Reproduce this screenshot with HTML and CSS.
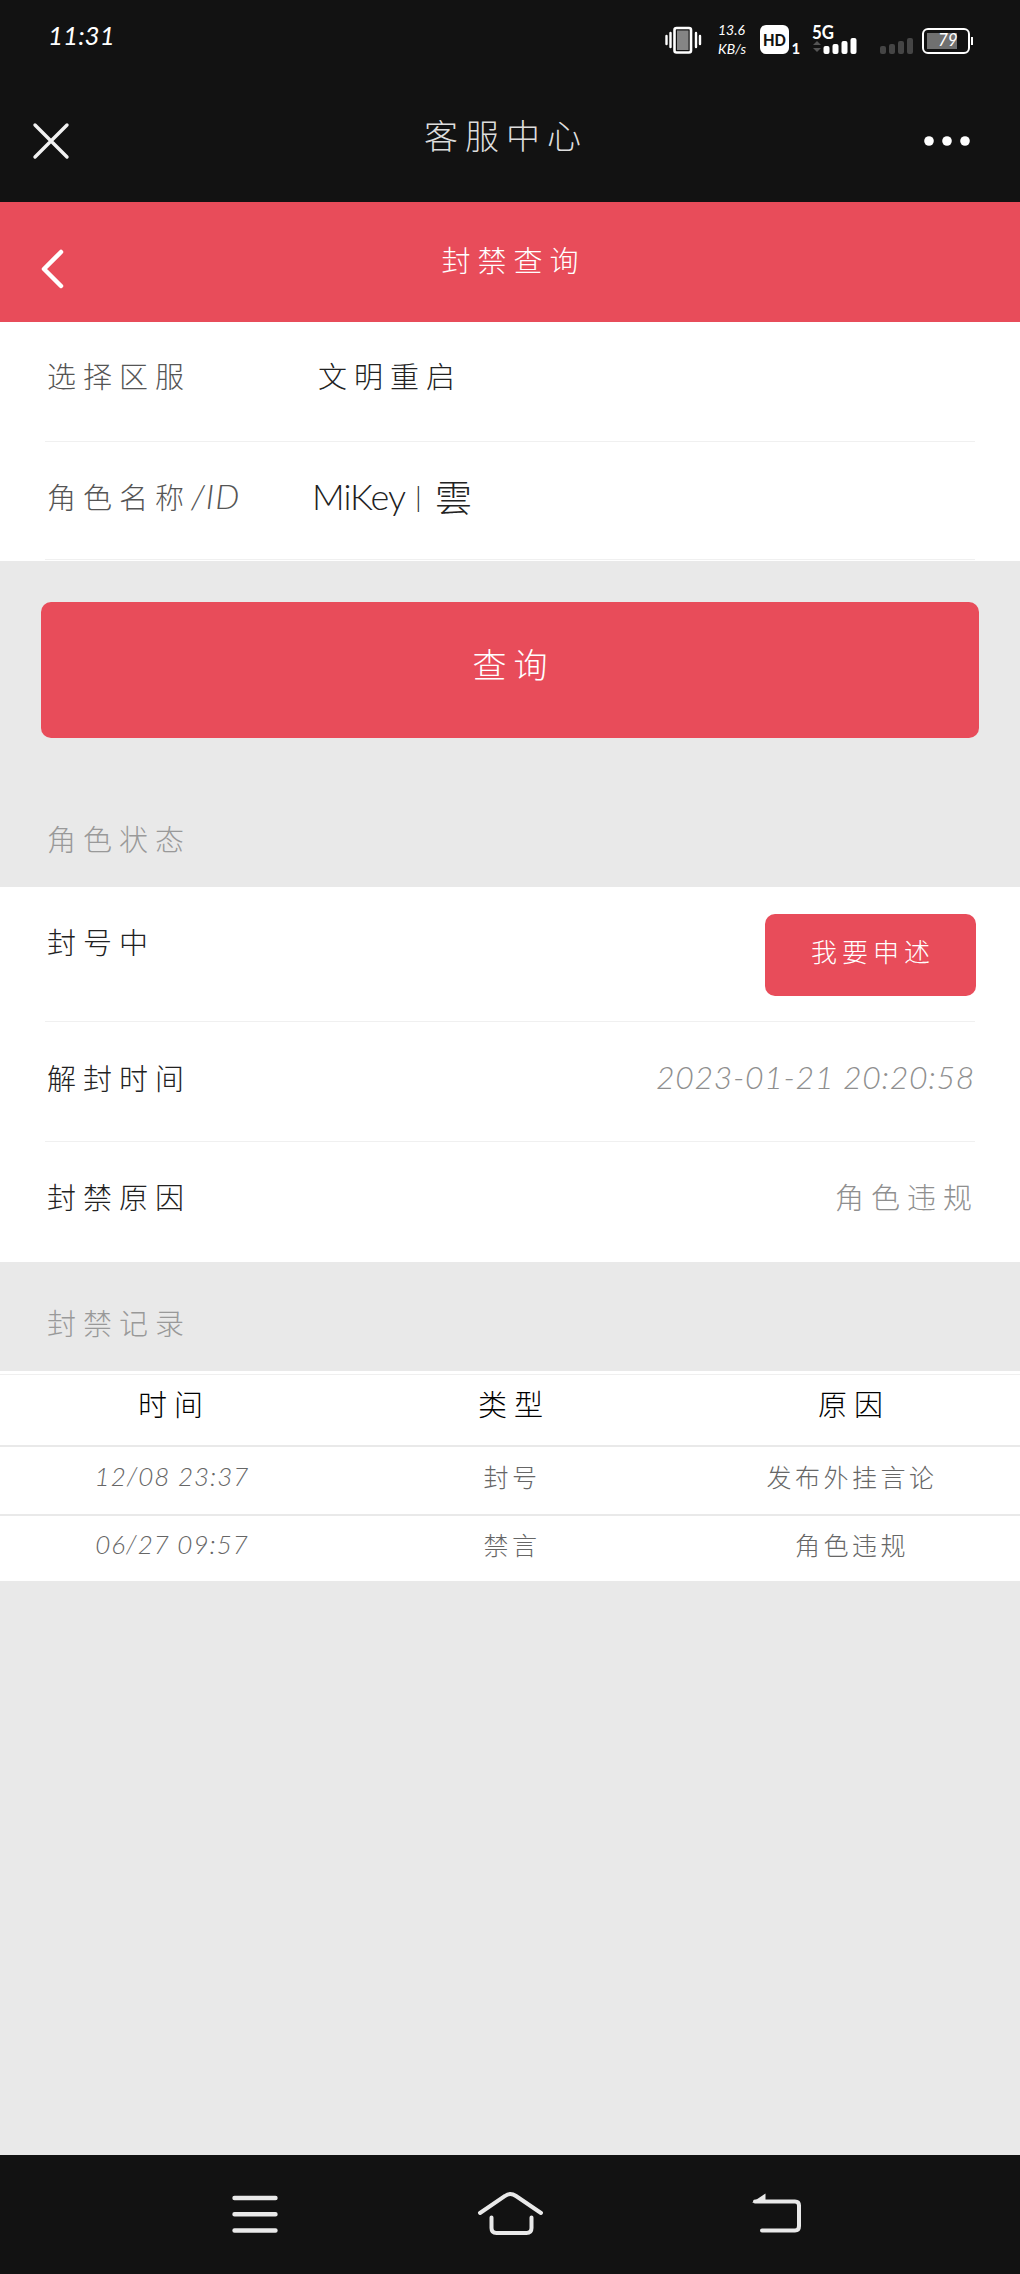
FILE: index.html
```html
<!DOCTYPE html>
<html lang="zh-CN">
<head>
<meta charset="utf-8">
<title>客服中心</title>
<link rel="stylesheet" href="styles.css">
</head>
<body>
<header class="top">
  <div class="status">
    <span class="clock">11:31</span>
    <svg class="vibrate" width="38" height="30" viewBox="0 0 38 30">
      <path d="M1.500 11v8M5.500 8v14M31 8v14M35 11v8" stroke="#fff" stroke-width="2.400" stroke-linecap="round"/>
      <rect x="9.500" y="3" width="16.500" height="24.500" rx="2" fill="none" stroke="#fff" stroke-width="2.600"/>
      <rect x="12" y="5.500" width="11.500" height="19.500" fill="#858585"/>
    </svg>
    <div class="speed"><span>13.6</span><span>KB/s</span></div>
    <svg class="hd" width="44" height="34" viewBox="0 0 44 34">
      <rect width="29" height="29" rx="6" fill="#fff"/>
      <text x="3" y="20.500" textLength="23" lengthAdjust="spacingAndGlyphs" class="hd-text">HD</text>
      <text x="31.500" y="28.500" class="sim">1</text>
    </svg>
    <svg class="signal" width="47" height="34" viewBox="0 0 47 34">
      <text x="1" y="14" textLength="22" lengthAdjust="spacingAndGlyphs" class="net">5G</text>
      <path d="M2 20l4-4 4 4zM2 23h8l-4 4z" fill="#555"/>
      <g fill="#fff"><rect x="12.500" y="21" width="6" height="8" rx="2"/><rect x="21.500" y="19" width="6" height="10" rx="2"/><rect x="30.500" y="16" width="6" height="13" rx="2"/><rect x="39.500" y="13" width="6" height="16" rx="2"/></g>
    </svg>
    <svg class="signal-off" width="34" height="30" viewBox="0 0 34 30">
      <g fill="#454545"><rect y="21" width="6" height="8" rx="2"/><rect x="9" y="19" width="6" height="10" rx="2"/><rect x="18" y="16" width="6" height="13" rx="2"/><rect x="27" y="13" width="6" height="16" rx="2"/></g>
    </svg>
    <svg class="battery" width="53" height="30" viewBox="0 0 53 30">
      <rect x="2" y="4" width="46" height="24" rx="5" fill="none" stroke="#fff" stroke-width="2"/>
      <rect x="6" y="8" width="30" height="16" fill="#707070"/>
      <path d="M51 12v8" stroke="#fff" stroke-width="2"/>
      <text x="17" y="20.500" class="charge">79</text>
    </svg>
  </div>
  <div class="titlebar">
    <svg width="38" height="38" viewBox="0 0 38 38"><path d="M3 3l32 32M35 3L3 35" stroke="#f2f2f2" stroke-width="3.400" stroke-linecap="round"/></svg>
    <h1 class="app-title">客服中心</h1>
    <svg width="48" height="12" viewBox="0 0 48 12" fill="#fff"><circle cx="6" cy="6" r="4.800"/><circle cx="24" cy="6" r="4.800"/><circle cx="42" cy="6" r="4.800"/></svg>
  </div>
</header>
<div class="pagebar">
  <svg class="back" width="26" height="42" viewBox="0 0 26 42"><path d="M22 4L5 21l17 17" fill="none" stroke="#fff" stroke-width="4.500" stroke-linecap="round" stroke-linejoin="round"/></svg>
  <h2 class="page-title">封禁查询</h2>
</div>
<main class="content">
  <section class="panel form">
    <div class="row"><span class="label">选择区服</span><span class="value server">文明重启</span></div>
    <div class="row"><span class="label">角色名称<i class="latin slash-id">/ID</i></span><span class="value role"><span class="nick">MiKey</span><span class="bar">|</span><span class="cloud">雲</span></span></div>
  </section>
  <button class="query">查询</button>
  <h3 class="caption caption-status">角色状态</h3>
  <section class="panel state">
    <div class="row row-action"><span class="dark">封号中</span><button class="appeal">我要申述</button></div>
    <div class="row"><span class="dark">解封时间</span><i class="latin muted date">2023-01-21 20:20:58</i></div>
    <div class="row row-last"><span class="dark">封禁原因</span><span class="muted">角色违规</span></div>
  </section>
  <h3 class="caption caption-log">封禁记录</h3>
  <section class="log">
    <div class="cells head"><span>时间</span><span>类型</span><span>原因</span></div>
    <div class="cells"><i class="latin">12/08 23:37</i><span>封号</span><span>发布外挂言论</span></div>
    <div class="cells cells-last"><i class="latin">06/27 09:57</i><span>禁言</span><span>角色违规</span></div>
  </section>
</main>
<nav class="keys">
  <svg width="50" height="44" viewBox="0 0 50 44"><path d="M4.500 6h41M4.500 22.300h41M4.500 38.500h41" stroke="#e9e9e9" stroke-width="4.400" stroke-linecap="round"/></svg>
  <svg width="68" height="44" viewBox="0 0 68 44" fill="none" stroke="#e9e9e9" stroke-width="4" stroke-linecap="round"><path d="M3 21L28 4q5-4 11 0l25 17M14.500 25.500V36q0 5 5 5h30q5 0 5-5V25.500"/></svg>
  <svg width="54" height="44" viewBox="0 0 54 44"><path d="M5 9.500h40q4 0 4 4V34q0 4.500-4 4.500H12" fill="none" stroke="#e9e9e9" stroke-width="4" stroke-linecap="round"/><path d="M2 10.500L15.500 1.500v9z" fill="#e9e9e9"/></svg>
</nav>
</body>
</html>
```
FILE: styles.css
```css
* { box-sizing: border-box; }
body {
  margin: 0;
  width: 1020px;
  height: 2274px;
  display: flex;
  flex-direction: column;
  background: #e9e9e9;
  font-family: "Noto Sans CJK SC", sans-serif;
  font-weight: 300;
  font-size: 29px;
  letter-spacing: 7px;
  line-height: 40px;
  color: #222;
}
h1, h2, h3 { margin: 0; font-weight: 300; }
button { border: 0; padding: 0; font: inherit; color: #fff; background: #e84c5a; }
svg { display: block; flex: none; overflow: visible; }
.latin { font-family: "Lato", sans-serif; font-weight: 300; font-style: italic; }

.top { height: 202px; background: #121212; color: #fff; }
.status { height: 80px; padding: 25px 0 0 48px; display: flex; align-items: flex-start; }
.clock { width: 617px; font: italic 400 26px/20px "Lato", sans-serif; letter-spacing: 0; }
.speed { margin-left: 15px; width: 42px; display: flex; flex-direction: column; gap: 4px; font: italic 400 14px/15px "Lato", sans-serif; letter-spacing: 0; margin-top: -3px; }
.signal { margin-left: 7px; }
.signal-off { margin-left: 22px; }
.battery { margin-left: 7px; }
.hd-text { font: 900 16px "Lato", sans-serif; fill: #121212; letter-spacing: 0; }
.sim { font: 700 15px "Lato", sans-serif; fill: #fff; letter-spacing: 0; }
.net { font: 700 18px "Lato", sans-serif; fill: #fff; letter-spacing: 0; }
.charge { font: italic 400 17px "Lato", sans-serif; fill: #fff; letter-spacing: 0; }
.titlebar { height: 122px; padding: 0 47px 0 32px; display: grid; grid-template-columns: 160px 1fr 160px; align-items: center; }
.titlebar > svg:last-child { justify-self: end; margin-right: 2px; }
.app-title { font-size: 34px; letter-spacing: 7px; text-align: center; color: #ddd; padding: 0 0 12px 7px; }

.pagebar { height: 120px; padding: 0 39px; display: grid; grid-template-columns: 60px 1fr 60px; align-items: center; background: #e84c5a; color: #fff; }
.back { margin-top: 14px; }
.page-title { font-size: 29px; text-align: center; padding: 0 0 6px 7px; }

.panel { background: #fff; padding: 0 45px; }
.row { height: 120px; display: flex; align-items: center; padding: 0 0 14px 2px; border-bottom: 1px solid #f0f0f0; }
.form { height: 239px; }
.form .row + .row { height: 118px; padding-bottom: 9px; }
.label { width: 271px; color: #555; white-space: nowrap; }
.slash-id { font-size: 34px; letter-spacing: 1px; }
.role { display: flex; align-items: center; margin-left: -6px; letter-spacing: 0; }
.nick { width: 103px; font: 300 36px/40px "Lato", sans-serif; letter-spacing: -1px; }
.bar { width: 20px; font: 300 28px/36px "Lato", sans-serif; }
.cloud { font-size: 37px; }

.query { display: block; width: 938px; height: 136px; margin: 41px auto 0; padding-bottom: 13px; border-radius: 10px; font-size: 34px; letter-spacing: 7px; text-indent: 7px; }
.caption { padding-left: 47px; font-size: 29px; color: #999; }
.caption-status { height: 149px; padding-top: 80px; }
.dark { color: #222; }
.muted { color: #8f8f8f; margin-right: -4px; }
.date { font-size: 32px; letter-spacing: .7px; margin-right: 0; }
.state .row { justify-content: space-between; }
.state .row-action { height: 135px; padding-bottom: 0; align-items: flex-start; padding-top: 27px; }
.row-action .dark { margin-top: 7px; }
.appeal { width: 211px; height: 82px; margin-right: -1px; padding-bottom: 8px; border-radius: 10px; font-size: 26px; letter-spacing: 5px; text-indent: 5px; }
.state .row-last { border: 0; padding-bottom: 12px; }
.state .row:nth-child(2) { padding-bottom: 9px; }
.caption-log { height: 109px; padding-top: 40px; }

.log { background: #fff; padding-top: 3px; font-size: 25px; letter-spacing: 3.500px; color: #666; }
.cells { height: 69px; display: grid; grid-template-columns: repeat(3, 340px); align-items: center; text-align: center; padding: 0 0 10px 2px; border-bottom: 2px solid #e9e9e9; }
.cells .latin { font-size: 26px; letter-spacing: 1px; }
.head { height: 73px; border-top: 1px solid #efefef; font-size: 29px; letter-spacing: 7px; color: #000; padding: 0 0 14px 4px; }
.cells-last { height: 65px; border: 0; }

.keys { height: 119px; margin-top: auto; padding: 37px 216px 0 230px; display: grid; grid-template-columns: 247px 1fr auto; background: #121212; }
```
